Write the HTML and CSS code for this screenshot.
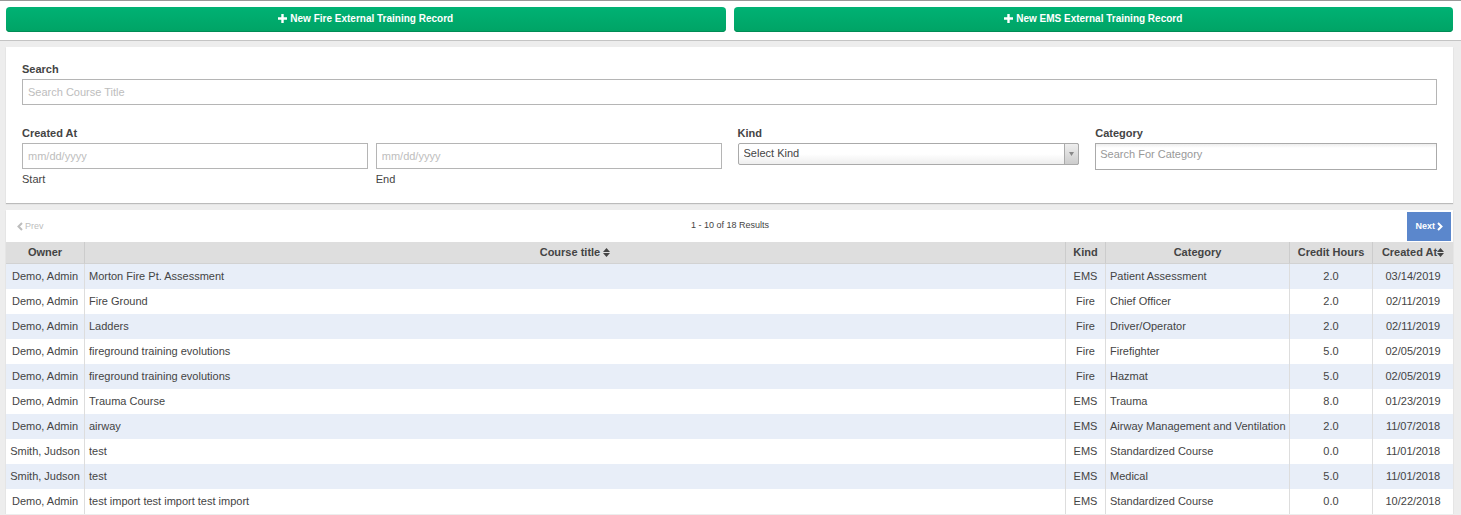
FILE: index.html
```html
<!DOCTYPE html>
<html lang="en">
<head>
<meta charset="utf-8">
<title>External Training Records</title>
<link rel="stylesheet" href="styles.css">
</head>
<body>
<header class="actions">
  <button class="btn-new" type="button"><svg class="icon-plus" viewBox="0 0 9 9" aria-hidden="true"><path d="M3.3 0h2.4v3.3H9v2.4H5.7V9H3.3V5.7H0V3.3h3.3z"/></svg>New Fire External Training Record</button>
  <button class="btn-new" type="button"><svg class="icon-plus" viewBox="0 0 9 9" aria-hidden="true"><path d="M3.3 0h2.4v3.3H9v2.4H5.7V9H3.3V5.7H0V3.3h3.3z"/></svg>New EMS External Training Record</button>
</header>
<main class="content">
  <form class="panel filters">
    <div class="field">
      <label class="label" for="search">Search</label>
      <input class="input" id="search" type="text" placeholder="Search Course Title">
    </div>
    <div class="filter-row">
      <div class="field" role="group" aria-labelledby="created">
        <span class="label" id="created">Created At</span>
        <div class="dates">
          <div class="date">
            <input class="input" id="start" type="text" placeholder="mm/dd/yyyy">
            <label class="hint" for="start">Start</label>
          </div>
          <div class="date">
            <input class="input" id="end" type="text" placeholder="mm/dd/yyyy">
            <label class="hint" for="end">End</label>
          </div>
        </div>
      </div>
      <div class="pair">
        <div class="field">
          <label class="label" for="kind">Kind</label>
          <div class="select-box">
            <select class="select" id="kind"><option>Select Kind</option></select>
            <span class="select-arrow"><svg class="icon-down" viewBox="0 0 5 4" aria-hidden="true"><path d="M0 0h5L2.5 4z"/></svg></span>
          </div>
        </div>
        <div class="field">
          <label class="label" for="category">Category</label>
          <input class="input input-category" id="category" type="text" placeholder="Search For Category">
        </div>
      </div>
    </div>
  </form>
  <section class="panel results">
    <nav class="pager" aria-label="Pages">
      <button class="page-btn prev" type="button" disabled><svg class="icon-chevron" viewBox="0 0 6 9" aria-hidden="true"><path d="M5 1L1.5 4.5L5 8"/></svg>Prev</button>
      <span class="count">1 - 10 of 18 Results</span>
      <button class="page-btn next" type="button">Next<svg class="icon-chevron" viewBox="0 0 6 9" aria-hidden="true"><path d="M1 1l3.5 3.5L1 8"/></svg></button>
    </nav>
    <table class="records">
      <colgroup><col class="c-owner"><col><col class="c-kind"><col class="c-category"><col class="c-hours"><col class="c-created"></colgroup>
      <thead>
        <tr>
          <th>Owner</th>
          <th>Course title <svg class="icon-sort" viewBox="0 0 7 9" aria-hidden="true"><path d="M0 4L3.5 0L7 4zM0 5h7L3.5 9z"/></svg></th>
          <th>Kind</th><th>Category</th><th>Credit Hours</th>
          <th>Created At<svg class="icon-sort" viewBox="0 0 7 9" aria-hidden="true"><path d="M0 4L3.5 0L7 4zM0 5h7L3.5 9z"/></svg></th>
        </tr>
      </thead>
      <tbody>
        <tr><td>Demo, Admin</td><td class="left">Morton Fire Pt. Assessment</td><td>EMS</td><td class="left">Patient Assessment</td><td>2.0</td><td>03/14/2019</td></tr>
        <tr><td>Demo, Admin</td><td class="left">Fire Ground</td><td>Fire</td><td class="left">Chief Officer</td><td>2.0</td><td>02/11/2019</td></tr>
        <tr><td>Demo, Admin</td><td class="left">Ladders</td><td>Fire</td><td class="left">Driver/Operator</td><td>2.0</td><td>02/11/2019</td></tr>
        <tr><td>Demo, Admin</td><td class="left">fireground training evolutions</td><td>Fire</td><td class="left">Firefighter</td><td>5.0</td><td>02/05/2019</td></tr>
        <tr><td>Demo, Admin</td><td class="left">fireground training evolutions</td><td>Fire</td><td class="left">Hazmat</td><td>5.0</td><td>02/05/2019</td></tr>
        <tr><td>Demo, Admin</td><td class="left">Trauma Course</td><td>EMS</td><td class="left">Trauma</td><td>8.0</td><td>01/23/2019</td></tr>
        <tr><td>Demo, Admin</td><td class="left">airway</td><td>EMS</td><td class="left">Airway Management and Ventilation</td><td>2.0</td><td>11/07/2018</td></tr>
        <tr><td>Smith, Judson</td><td class="left">test</td><td>EMS</td><td class="left">Standardized Course</td><td>0.0</td><td>11/01/2018</td></tr>
        <tr><td>Smith, Judson</td><td class="left">test</td><td>EMS</td><td class="left">Medical</td><td>5.0</td><td>11/01/2018</td></tr>
        <tr><td>Demo, Admin</td><td class="left">test import test import test import</td><td>EMS</td><td class="left">Standardized Course</td><td>0.0</td><td>10/22/2018</td></tr>
      </tbody>
    </table>
  </section>
</main>
</body>
</html>
```
FILE: styles.css
```css
* { box-sizing: border-box; }

body {
  margin: 0;
  background: #ededed;
  color: #444;
  font: 11px/16px "Liberation Sans", Arial, sans-serif;
}

button, input, select { font: inherit; color: inherit; margin: 0; }

.actions {
  display: grid;
  grid-template-columns: 1fr 1fr;
  gap: 8px;
  padding: 6px 8px 8px 6px;
  background: #fff;
  border-top: 1px solid #999;
  border-bottom: 1px solid #c4c4c4;
}

.btn-new {
  display: flex;
  align-items: center;
  justify-content: center;
  gap: 3px;
  height: 25px;
  padding: 0 0 2px;
  border: 0;
  border-radius: 4px;
  background: linear-gradient(#00b274, #00a365);
  box-shadow: inset 0 -1px 0 #008c55;
  color: #fff;
  font-size: 10px;
  font-weight: bold;
}

.icon-plus { width: 9px; height: 9px; fill: #fff; }

.content {
  display: flex;
  flex-direction: column;
  gap: 7px;
  padding: 6px 8px 0 6px;
}

.panel { background: #fff; box-shadow: 0 1px 1px #bbb; }

.filters {
  display: flex;
  flex-direction: column;
  gap: 20px;
  padding: 14px 16px 16px;
}

.filter-row { display: grid; grid-template-columns: 1fr 1fr; gap: 16px; }
.pair { display: grid; grid-template-columns: 1fr 1fr; gap: 16px; }
.dates { display: grid; grid-template-columns: 1fr 1fr; gap: 8px; }
.field, .date { display: flex; flex-direction: column; min-width: 0; }
.label { height: 18px; font-weight: bold; }
.hint { padding-top: 2px; }

.input {
  width: 100%;
  height: 26px;
  padding: 0 5px 1px;
  border: 1px solid #b5b5b5;
  border-radius: 0;
  background: #fff;
}

.input::placeholder { color: #bdbdbd; opacity: 1; }

.input-category {
  height: 27px;
  padding: 0 4px 5px;
  border-color: #aaa;
  background: linear-gradient(#eee, #fff 4px);
}

.input-category::placeholder { color: #999; }

.select-box { display: grid; }

.select {
  grid-area: 1 / 1;
  appearance: none;
  width: 100%;
  height: 22px;
  padding: 0 20px 2px 5px;
  border: 1px solid #aaa;
  border-radius: 2px;
  background: linear-gradient(#fff 50%, #eee);
}

.select-arrow {
  grid-area: 1 / 1;
  justify-self: end;
  display: grid;
  place-items: center;
  width: 15px;
  border: 1px solid #aaa;
  border-radius: 0 2px 2px 0;
  background: linear-gradient(#eee, #ccc);
  pointer-events: none;
}

.icon-down { width: 5px; height: 4px; fill: #888; }

.pager {
  display: grid;
  grid-template-columns: 1fr auto 1fr;
  align-items: center;
  padding: 2px 2px 1px 3px;
  font-size: 9px;
  font-weight: bold;
}

.page-btn {
  display: flex;
  align-items: center;
  gap: 2px;
  height: 29px;
  padding: 0 8px 1px;
  border: 0;
  background: #fff;
}

.prev { justify-self: start; color: #bdbdbd; font-weight: normal; }
.next { justify-self: end; background: #5b87cc; color: #fff; }
.icon-chevron { width: 6px; height: 9px; fill: none; stroke: currentColor; stroke-width: 2; }
.count { padding-bottom: 4px; font-weight: normal; }

.records {
  width: 100%;
  table-layout: fixed;
  border-collapse: separate;
  border-spacing: 0;
}

.c-owner { width: 78px; }
.c-kind { width: 40px; }
.c-category { width: 184px; }
.c-hours { width: 83px; }
.c-created { width: 81px; }

.records th, .records td {
  padding: 0 4px 2px;
  border-left: 1px solid #ddd;
  text-align: center;
  white-space: nowrap;
}

.records th {
  height: 22px;
  padding: 0 0 2px;
  border-left-color: #ccc;
  border-bottom: 1px solid #d2d2d2;
  background: #dedede;
}

.records td { height: 25px; }
.records th:first-child, .records td:first-child { border-left: 0; }
.records tbody tr:nth-child(odd) { background: #e8eef8; }
.records .left { text-align: left; }
.icon-sort { width: 7px; height: 9px; fill: #444; vertical-align: -1px; }
```
